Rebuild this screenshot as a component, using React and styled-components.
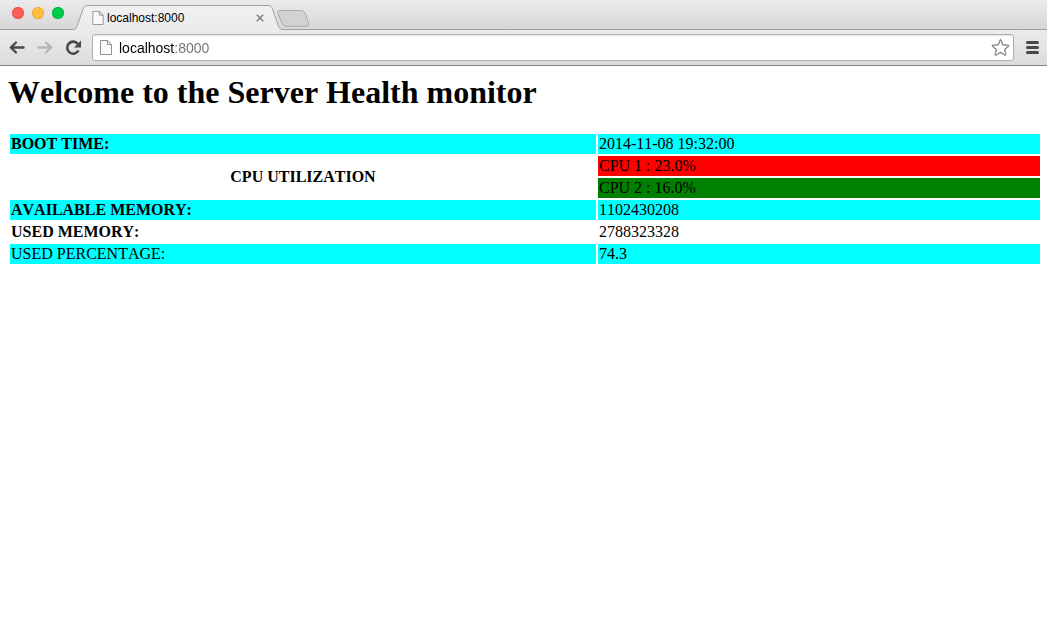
import React from 'react';
import styled, { createGlobalStyle } from 'styled-components';

const GlobalStyle = createGlobalStyle`
  *, *::before, *::after { box-sizing: border-box; }
  body { margin: 0; background: #fff; color: #000; }
  button { margin: 0; padding: 0; border: 0; background: none; display: block; flex: none; }
  svg { display: block; flex: none; }
`;

const Browser = styled.div`
  display: flex;
  flex-direction: column;
  min-height: 100vh;
  font-family: "Liberation Sans", Arial, sans-serif;
`;

const TabStrip = styled.header`
  display: flex;
  align-items: flex-end;
  height: 30px;
  padding-left: 12px;
  background: linear-gradient(#ebebeb, #d6d6d6);
  box-shadow: inset 0 -1px #a0a0a0;
`;

const WindowControls = styled.div`
  display: flex;
  gap: 8px;
  width: 61px;
  padding-bottom: 11px;
`;

const ControlDot = styled.button`
  width: 12px;
  height: 12px;
  border-radius: 50%;
  background: ${(p) => p.$color};
  box-shadow: inset 0 0 0 1px ${(p) => p.$edge};
`;

const Tab = styled.div`
  display: flex;
  height: 25px;
`;

const TabBody = styled.div`
  display: flex;
  align-items: center;
  width: 180px;
  padding: 0 3px 0 4px;
  border-top: 1px solid #a0a0a0;
  background: linear-gradient(#f1f1f1, #ebebeb);
`;

const TabTitle = styled.span`
  flex: 1;
  margin-left: 3px;
  font-size: 12px;
  line-height: 16px;
  font-kerning: none;
`;

const NewTab = styled.button`
  height: 17px;
  margin: 0 0 3px -7px;
`;

const Toolbar = styled.form`
  display: flex;
  align-items: center;
  height: 36px;
  padding: 0 7px 0 9px;
  background: linear-gradient(#ebebeb, #dcdcdc);
  border-bottom: 1px solid #848484;
`;

const NavButtons = styled.div`
  display: flex;
  gap: 12px;
  width: 83px;
`;

const AddressBar = styled.div`
  display: flex;
  align-items: center;
  flex: 1;
  height: 27px;
  margin-right: 11px;
  padding: 0 3px 0 7px;
  background: #fff;
  border: 1px solid #b0b0b0;
  border-radius: 3px;
  box-shadow: inset 0 1px 1px #e4e4e4;
`;

/* The host is black and the port is grey. */
const AddressInput = styled.input`
  flex: 1;
  min-width: 0;
  height: 20px;
  margin: 0 0 0 7px;
  padding: 0;
  border: 0;
  outline: 0;
  font: 14px/20px "Liberation Sans", Arial, sans-serif;
  color: #000;
  background: linear-gradient(90deg, #000 56px, #707070 56px);
  background-clip: text;
  -webkit-text-fill-color: transparent;
`;

const Page = styled.main`
  flex: 1;
  padding: 8px 5px 8px 8px;
  font-family: "Liberation Serif", "Times New Roman", serif;
  font-kerning: none;
`;

const Heading = styled.h1`
  margin: 0 0 22px;
  font-size: 32px;
  line-height: 36px;
  font-weight: bold;
`;

const HealthTable = styled.table`
  width: 100%;
  table-layout: fixed;
  border-collapse: separate;
  border-spacing: 2px;
  font-size: 16px;
  line-height: 18px;
`;

const LabelColumn = styled.col`
  width: 57%;
`;

const Row = styled.tr`
  background: ${(p) => p.$color || 'transparent'};
`;

const Label = styled.th`
  padding: 1px;
  text-align: ${(p) => p.$align || 'left'};
  font-weight: ${(p) => p.$weight || 'bold'};
`;

const Value = styled.td`
  padding: 1px;
  background: ${(p) => p.$color || 'transparent'};
`;

function PageIcon({ width, height }) {
  return (
    <svg width={width} height={height} viewBox="0 0 12 15" fill="none" aria-hidden="true">
      <path d="M.5 .5h7l4 4v10H.5z" fill="#fbfbfb" stroke="#929292" />
      <path d="M7.500 .5v4h4" stroke="#929292" />
    </svg>
  );
}

function ArrowIcon({ color, flip }) {
  return (
    <svg width="16" height="16" viewBox="0 0 16 16" fill="none" aria-hidden="true">
      <path
        d={flip ? 'M1.500 7.500h12.500M9 2.500l5.200 5L9 12.500' : 'M14.500 7.500H2M7 2.500l-5.200 5 5.200 5'}
        stroke={color}
        strokeWidth="2.400"
        strokeLinecap="round"
        strokeLinejoin="round"
      />
    </svg>
  );
}

export default function App() {
  return (
    <Browser>
      <GlobalStyle />
      <TabStrip>
        <WindowControls>
          <ControlDot type="button" aria-label="Close window" $color="#ff5f5b" $edge="#ed514d" />
          <ControlDot type="button" aria-label="Minimize window" $color="#ffbd44" $edge="#eaab36" />
          <ControlDot type="button" aria-label="Zoom window" $color="#00ca4e" $edge="#00b844" />
        </WindowControls>
        <Tab>
          <svg width="15" height="25" viewBox="0 0 15 25" aria-hidden="true">
            <defs>
              <linearGradient id="tabFill" x1="0" y1="0" x2="0" y2="1">
                <stop offset="0" stopColor="#f1f1f1" />
                <stop offset="1" stopColor="#ebebeb" />
              </linearGradient>
            </defs>
            <path d="M0 25v-.5c2 0 3-1 4-3L10 4C11 1.500 12.500 .5 15 .5V25z" fill="url(#tabFill)" />
            <path d="M0 24.500c2 0 3-1 4-3L10 4C11 1.500 12.500 .5 15 .5" fill="none" stroke="#a0a0a0" />
          </svg>
          <TabBody>
            <PageIcon width="12" height="14" />
            <TabTitle>localhost:8000</TabTitle>
            <button type="button" aria-label="Close tab">
              <svg width="10" height="10" viewBox="0 0 10 10" aria-hidden="true">
                <path d="m1.800 1.800 6.400 6.400M8.200 1.800 1.800 8.200" stroke="#808080" strokeWidth="1.500" />
              </svg>
            </button>
          </TabBody>
          <svg width="16" height="25" viewBox="0 0 16 25" aria-hidden="true">
            <path d="M0 25V.5c2.500 0 3.500 1 4.500 3.500l6 17.500c1 2 2 3 5.500 3v.5z" fill="url(#tabFill)" />
            <path d="M0 .5c2.500 0 3.500 1 4.500 3.500l6 17.500c1 2 2 3 5.500 3" fill="none" stroke="#a0a0a0" />
          </svg>
        </Tab>
        <NewTab type="button" aria-label="New tab">
          <svg width="33" height="17" viewBox="0 0 33 17" aria-hidden="true">
            <path
              d="M2.500 .5h21c2.500 0 3.800 .8 4.600 2.700l3.400 9.800c.6 2.200 0 3.300-2.200 3.300H9.500c-2.500 0-3.600-.8-4.400-2.700L.9 3C.3 1.300.8 .5 2.500 .5z"
              fill="#d2d2d2"
              stroke="#a9a9a9"
            />
          </svg>
        </NewTab>
      </TabStrip>
      <Toolbar onSubmit={(e) => e.preventDefault()}>
        <NavButtons>
          <button type="button" aria-label="Back"><ArrowIcon color="#484848" /></button>
          <button type="button" aria-label="Forward"><ArrowIcon color="#b5b5b5" flip /></button>
          <button type="button" aria-label="Reload">
            <svg width="16" height="16" viewBox="0 0 16 16" aria-hidden="true">
              <path d="M12.800 3.800A6 6 0 1 0 13.500 10.500" fill="none" stroke="#484848" strokeWidth="2.600" />
              <path d="M16 .5v7H9z" fill="#484848" />
            </svg>
          </button>
        </NavButtons>
        <AddressBar>
          <PageIcon width="12" height="15" />
          <AddressInput type="text" aria-label="Address" defaultValue="localhost:8000" spellCheck={false} />
          <button type="button" aria-label="Bookmark this page">
            <svg width="19" height="19" viewBox="0 0 19 19" aria-hidden="true">
              <path
                d="M9.500 1.500C10 1.500 11 5.500 11.800 6.700 12.800 7.200 17.800 6.800 17.800 7.600 17.800 8.500 14.500 10.500 13.700 11.500 13.700 12.700 15.600 16.500 14.800 17.200 13.800 17.700 10.700 14.600 9.500 14.500 8.300 14.600 5.200 17.700 4.200 17.200 3.400 16.500 5.300 12.700 5.300 11.500 4.500 10.500 1.200 8.500 1.200 7.600 1.200 6.800 6.200 7.200 7.200 6.700 8 5.500 9 1.500 9.500 1.500z"
                fill="#fff"
                stroke="#858585"
                strokeWidth="1.300"
                strokeLinejoin="round"
              />
            </svg>
          </button>
        </AddressBar>
        <button type="button" aria-label="Menu">
          <svg width="15" height="15" viewBox="0 0 15 15" aria-hidden="true">
            <path d="M2.500 2.500h10M2.500 7.500h10M2.500 12.500h10" stroke="#484848" strokeWidth="3" strokeLinecap="round" />
          </svg>
        </button>
      </Toolbar>
      <Page>
        <Heading>Welcome to the Server Health monitor</Heading>
        <HealthTable>
          <colgroup>
            <LabelColumn />
            <col />
          </colgroup>
          <tbody>
            <Row $color="#00ffff">
              <Label scope="row">BOOT TIME:</Label>
              <Value>2014-11-08 19:32:00</Value>
            </Row>
            <Row>
              <Label scope="rowgroup" rowSpan={2} $align="center">CPU UTILIZATION</Label>
              <Value $color="#ff0000">CPU 1 : 23.0%</Value>
            </Row>
            <Row>
              <Value $color="#008000">CPU 2 : 16.0%</Value>
            </Row>
            <Row $color="#00ffff">
              <Label scope="row">AVAILABLE MEMORY:</Label>
              <Value>1102430208</Value>
            </Row>
            <Row>
              <Label scope="row">USED MEMORY:</Label>
              <Value>2788323328</Value>
            </Row>
            <Row $color="#00ffff">
              <Label scope="row" $weight="normal">USED PERCENTAGE:</Label>
              <Value>74.3</Value>
            </Row>
          </tbody>
        </HealthTable>
      </Page>
    </Browser>
  );
}
